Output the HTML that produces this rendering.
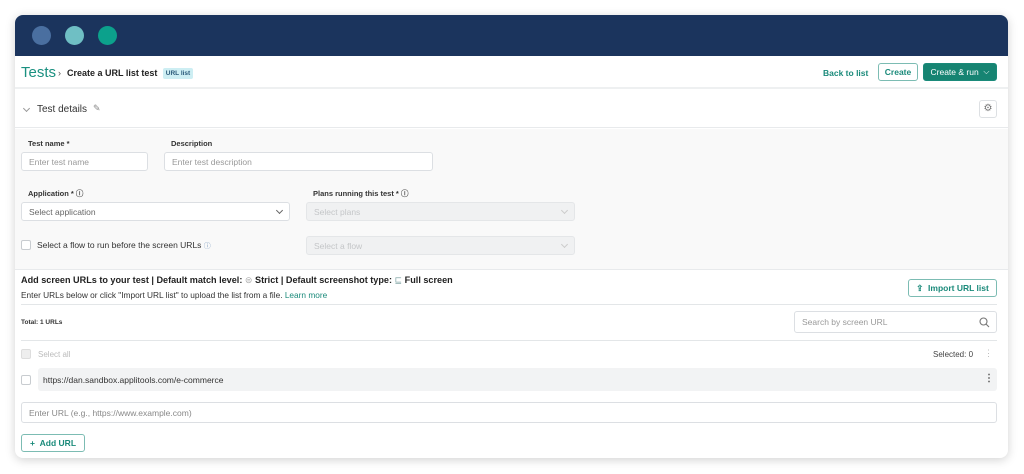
<!DOCTYPE html>
<html><head><style>
*{box-sizing:border-box;margin:0;padding:0}
body{width:1024px;height:474px;background:#fff;font-family:"Liberation Sans",sans-serif;position:relative;overflow:hidden;color:#333}
.a{position:absolute}
.win{left:15px;top:15px;width:993px;height:443px;border-radius:8px;box-shadow:0 2px 10px rgba(0,0,0,.18);overflow:hidden;background:#fff}
.hdr{left:0;top:0;width:993px;height:41px;background:#1b345d}
.dot{width:19px;height:19px;border-radius:50%;top:11px}
.in{border:1px solid #dcdfe3;border-radius:3px;background:#fff;font-size:8.5px;color:#999;padding-left:7px;display:flex;align-items:center}
.dis{background:#f0f1f2;border-color:#e4e6e8;color:#c4c6c8}
.lbl{font-size:7.5px;font-weight:bold;color:#333}
.btn{border:1px solid #1a8a7a;border-radius:3px;color:#1a8a7a;font-size:8.5px;font-weight:bold;display:flex;align-items:center;justify-content:center}
.cb{width:10px;height:10px;border:1px solid #c8ccd0;border-radius:2px;background:#fff}
.chev{width:5px;height:5px;border-right:1px solid #999;border-bottom:1px solid #999;transform:rotate(45deg)}
</style></head><body>
<div class="a win">
<div class="a hdr">
<div class="a dot" style="left:17px;background:#4a6fa0"></div>
<div class="a dot" style="left:50px;background:#6fbfc4"></div>
<div class="a dot" style="left:83px;background:#0ca18c"></div>
</div>
<div class="a" style="left:0;top:41px;width:993px;height:33px;border-bottom:2px solid #eef0f1"></div>
<div class="a" style="left:6px;top:49px;font-size:15px;color:#1a9080">Tests</div>
<div class="a" style="left:43px;top:53px;font-size:9px;color:#555">›</div>
<div class="a" style="left:52px;top:53px;font-size:9px;font-weight:bold;color:#222">Create a URL list test</div>
<div class="a" style="left:148px;top:53px;width:30px;height:11px;background:#cdeef3;border-radius:2px;font-size:6.5px;font-weight:bold;color:#2b5a7a;text-align:center;line-height:11px">URL list</div>
<div class="a" style="left:808px;top:53px;font-size:8.5px;font-weight:bold;color:#1a8a7a">Back to list</div>
<div class="a btn" style="left:863px;top:48px;width:40px;height:18px;border-color:#7cbcb3">Create</div>
<div class="a btn" style="left:908px;top:48px;width:74px;height:18px;background:#168472;color:#fff;font-weight:normal">Create &amp; run &nbsp;<span style="font-size:8px">⌵</span></div>
<div class="a" style="left:0;top:75px;width:993px;height:38px;border-bottom:1px solid #e8eaec"></div>
<div class="a chev" style="left:9px;top:91px"></div>
<div class="a" style="left:22px;top:89px;font-size:10px;color:#333">Test details</div>
<div class="a" style="left:78px;top:88px;font-size:9px;color:#888">✎</div>
<div class="a" style="left:964px;top:85px;width:18px;height:18px;border:1px solid #dde0e3;border-radius:3px;font-size:10px;color:#777;text-align:center;line-height:16px">⚙</div>
<div class="a" style="left:0;top:114px;width:993px;height:141px;background:#f9f9f9;border-bottom:1px solid #e8eaec"></div>
<div class="a lbl" style="left:13px;top:124px">Test name *</div>
<div class="a in" style="left:6px;top:137px;width:127px;height:19px">Enter test name</div>
<div class="a lbl" style="left:156px;top:124px">Description</div>
<div class="a in" style="left:149px;top:137px;width:269px;height:19px">Enter test description</div>
<div class="a lbl" style="left:13px;top:173px">Application * <span style="color:#555">ⓘ</span></div>
<div class="a in" style="left:6px;top:187px;width:269px;height:19px;color:#666">Select application</div>
<div class="a chev" style="left:262px;top:193px;border-color:#666"></div>
<div class="a lbl" style="left:298px;top:173px">Plans running this test * <span style="color:#555">ⓘ</span></div>
<div class="a in dis" style="left:291px;top:187px;width:269px;height:19px">Select plans</div>
<div class="a chev" style="left:547px;top:193px;border-color:#ccc"></div>
<div class="a cb" style="left:6px;top:225px"></div>
<div class="a" style="left:22px;top:225px;font-size:8.5px;color:#333">Select a flow to run before the screen URLs <span style="color:#7a9abf;font-size:7px">ⓘ</span></div>
<div class="a in dis" style="left:291px;top:221px;width:269px;height:19px">Select a flow</div>
<div class="a chev" style="left:547px;top:227px;border-color:#ccc"></div>
<div class="a" style="left:6px;top:260px;font-size:9.1px;font-weight:bold;color:#222">Add screen URLs to your test | Default match level: <span style="color:#aaa;font-weight:normal">⊜</span> Strict | Default screenshot type: <span style="color:#8aa;font-weight:normal">⊑</span> Full screen</div>
<div class="a" style="left:6px;top:275px;font-size:8.3px;color:#333">Enter URLs below or click "Import URL list" to upload the list from a file. <span style="color:#1a8a7a">Learn more</span></div>
<div class="a btn" style="left:893px;top:264px;width:89px;height:18px;border-color:#7cbcb3">⇪&nbsp; Import URL list</div>
<div class="a" style="left:6px;top:289px;width:976px;height:1px;background:#e3e6e8"></div>
<div class="a" style="left:6px;top:304px;font-size:6.5px;font-weight:bold;color:#333">Total: 1 URLs</div>
<div class="a in" style="left:779px;top:296px;width:203px;height:22px;color:#999">Search by screen URL</div>
<svg class="a" style="left:964px;top:302px" width="11" height="11" viewBox="0 0 11 11"><circle cx="4.5" cy="4.5" r="3.5" fill="none" stroke="#777" stroke-width="1.1"/><path d="M7 7l3 3" stroke="#777" stroke-width="1.1"/></svg>
<div class="a" style="left:6px;top:325px;width:976px;height:1px;background:#e3e6e8"></div>
<div class="a cb" style="left:6px;top:334px;background:#eee;border-color:#ddd"></div>
<div class="a" style="left:23px;top:335px;font-size:8px;color:#bbb">Select all</div>
<div class="a" style="left:918px;top:335px;font-size:8px;color:#444">Selected: 0</div>
<div class="a" style="left:969px;top:333px;font-size:9px;color:#bbb">⋮</div>
<div class="a cb" style="left:6px;top:360px"></div>
<div class="a" style="left:23px;top:353px;width:959px;height:23px;background:#f2f3f4;border-radius:3px"></div>
<div class="a" style="left:28px;top:360px;font-size:8.5px;color:#333">https://dan.sandbox.applitools.com/e-commerce</div>
<div class="a" style="left:969px;top:358px;font-size:10px;color:#555;font-weight:bold">⋮</div>
<div class="a in" style="left:6px;top:387px;width:976px;height:21px;color:#888">Enter URL (e.g., https://www.example.com)</div>
<div class="a btn" style="left:6px;top:419px;width:64px;height:18px;border-color:#7cbcb3">+&nbsp;&nbsp;Add URL</div>
</div>
</body></html>
